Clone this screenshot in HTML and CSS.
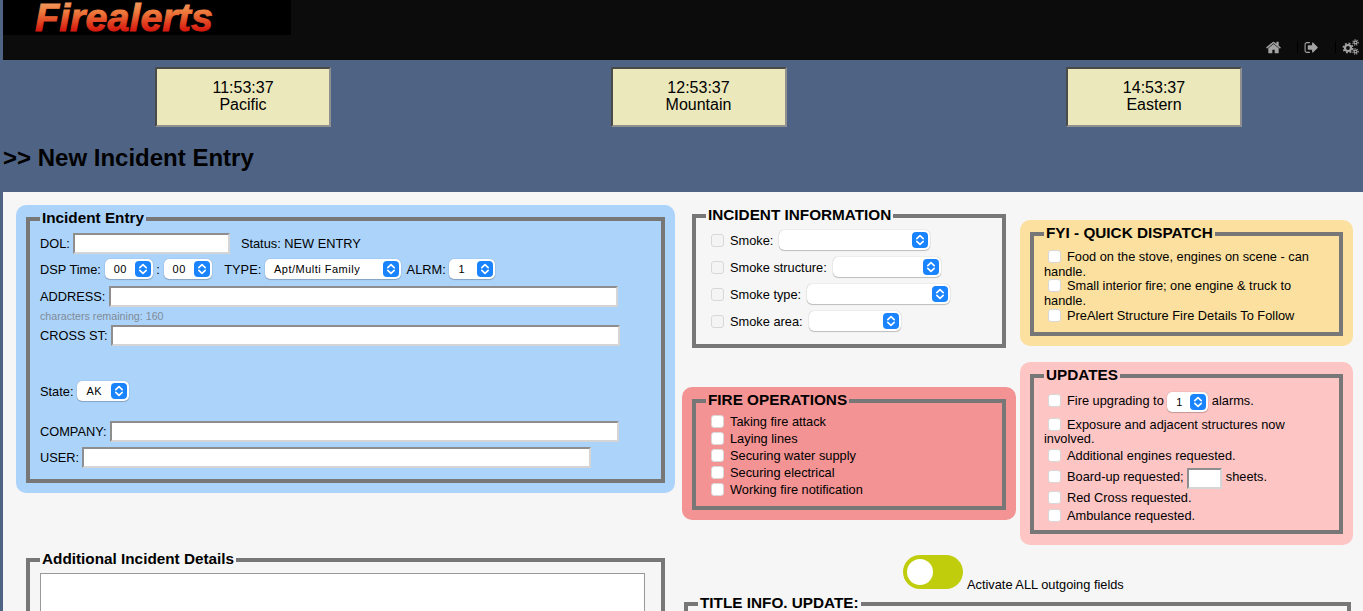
FILE: index.html
```html
<!DOCTYPE html>
<html lang="en">
<head>
  <meta charset="UTF-8" />
  <title>Firealerts – New Incident Entry</title>
  <link rel="stylesheet" href="styles.css">
</head>
<body>
  <svg class="defs" width="0" height="0">
    <defs>
      <linearGradient id="logoFill" x1="0" y1="0" x2="0" y2="1">
        <stop offset="0" stop-color="#f5b27c"/>
        <stop offset="0.4" stop-color="#ee7a3c"/>
        <stop offset="0.8" stop-color="#d81c10"/>
        <stop offset="1" stop-color="#c81208"/>
      </linearGradient>
    </defs>
    <symbol id="updown" viewBox="0 0 16 16">
      <path d="M4.8 6.6 8 3.6l3.2 3M4.8 9.4 8 12.4l3.2-3" fill="none" stroke="#fff" stroke-width="1.6" stroke-linecap="round" stroke-linejoin="round"/>
    </symbol>
  </svg>

  <header class="topbar">
    <div class="logo">
      <svg class="logo-svg" width="288" height="35"><text class="logo-text" x="32" y="30.5">Firealerts</text></svg>
    </div>
    <nav class="topnav">
      <svg class="icon icon-home" viewBox="0 0 1664 1408"><path transform="translate(0 -192)" d="M1408 992v480q0 26-19 45t-45 19h-384v-384h-256v384h-384q-26 0-45-19t-19-45v-480q0-1 .5-3t.5-3l575-474 575 474q1 2 1 6zm223-69l-62 74q-8 9-21 11h-3q-13 0-21-7l-692-577-692 577q-12 8-24 7-13-2-21-11l-62-74q-8-10-7-23.5t11-21.5l719-599q32-26 76-26t76 26l244 204v-195q0-14 9-23t23-9h192q14 0 23 9t9 23v408l219 182q10 8 11 21.5t-7 23.5z"/></svg>
      <span class="nav-sep"></span>
      <svg class="icon icon-out" viewBox="0 192 1664 1408"><path d="M704 1440q0 4 1 20t.5 26.5-3 23.5-10 19.5-20.5 6.5h-320q-119 0-203.5-84.5t-84.5-203.5v-704q0-119 84.5-203.5t203.5-84.5h320q13 0 22.5 9.5t9.5 22.5q0 4 1 20t.5 26.5-3 23.5-10 19.5-20.5 6.5h-320q-66 0-113 47t-47 113v704q0 66 47 113t113 47h312l11.5 1 11.5 3 8 5.5 7 9 2 13.5zm928-544q0 26-19 45l-544 544q-19 19-45 19t-45-19-19-45v-288h-448q-26 0-45-19t-19-45v-384q0-26 19-45t45-19h448v-288q0-26 19-45t45-19 45 19l544 544q19 19 19 45z"/></svg>
      <span class="nav-sep nav-sep-wide"></span>
      <svg class="icon icon-cogs" viewBox="0 0 17 16">
        <g fill="none" stroke="#a3a3a3">
          <circle cx="6" cy="9" r="3" stroke-width="2.2"/>
          <circle cx="6" cy="9" r="4.6" stroke-width="1.8" stroke-dasharray="1.8 1.81"/>
          <circle cx="13.5" cy="3.5" r="1.4" stroke-width="1.2"/>
          <circle cx="13.5" cy="3.5" r="2.6" stroke-width="1.2" stroke-dasharray="1.1 1.08"/>
          <circle cx="13.5" cy="12.5" r="1.4" stroke-width="1.2"/>
          <circle cx="13.5" cy="12.5" r="2.6" stroke-width="1.2" stroke-dasharray="1.1 1.08"/>
        </g>
      </svg>
    </nav>
  </header>

  <section class="clocks">
    <div class="clock">11:53:37<br>Pacific</div>
    <div class="clock">12:53:37<br>Mountain</div>
    <div class="clock">14:53:37<br>Eastern</div>
  </section>

  <h1 class="page-title">&gt;&gt; New Incident Entry</h1>

  <main class="content">
    <div class="col-left">
      <div class="panel panel-blue">
        <fieldset class="box box-entry">
          <legend>Incident Entry</legend>
          <div class="row row-dol">
            <label>DOL:</label>
            <input class="txt txt-dol" type="text">
            <span class="status">Status: NEW ENTRY</span>
          </div>
          <div class="row row-time">
            <label>DSP Time:</label>
            <span class="sel sel-time"><span class="val">00</span><span class="btn"><svg><use href="#updown"/></svg></span></span>
            <span>:</span>
            <span class="sel sel-time"><span class="val">00</span><span class="btn"><svg><use href="#updown"/></svg></span></span>
            <label class="lbl-type">TYPE:</label>
            <span class="sel sel-type"><span class="val">Apt/Multi Family</span><span class="btn"><svg><use href="#updown"/></svg></span></span>
            <label class="lbl-alrm">ALRM:</label>
            <span class="sel sel-alrm"><span class="val">1</span><span class="btn"><svg><use href="#updown"/></svg></span></span>
          </div>
          <div class="row row-address">
            <label>ADDRESS:</label>
            <input class="txt txt-long" type="text">
          </div>
          <div class="hint">characters remaining: 160</div>
          <div class="row">
            <label>CROSS ST:</label>
            <input class="txt txt-long" type="text">
          </div>
          <div class="row row-state">
            <label>State:</label>
            <span class="sel sel-state"><span class="val">AK</span><span class="btn"><svg><use href="#updown"/></svg></span></span>
          </div>
          <div class="row row-company">
            <label>COMPANY:</label>
            <input class="txt txt-long" type="text">
          </div>
          <div class="row row-user">
            <label>USER:</label>
            <input class="txt txt-long" type="text">
          </div>
        </fieldset>
      </div>

      <fieldset class="box box-details">
        <legend>Additional Incident Details</legend>
        <textarea class="details-text"></textarea>
      </fieldset>
    </div>

    <div class="col-right">
      <div class="col-pair">
        <div class="col-mid">
          <fieldset class="box box-info">
            <legend>INCIDENT INFORMATION</legend>
            <div class="info-row"><input class="chk" type="checkbox"><label>Smoke:</label><span class="sel sel-smoke"><span class="val"></span><span class="btn"><svg><use href="#updown"/></svg></span></span></div>
            <div class="info-row"><input class="chk" type="checkbox"><label>Smoke structure:</label><span class="sel sel-structure"><span class="val"></span><span class="btn"><svg><use href="#updown"/></svg></span></span></div>
            <div class="info-row"><input class="chk" type="checkbox"><label>Smoke type:</label><span class="sel sel-smoketype"><span class="val"></span><span class="btn"><svg><use href="#updown"/></svg></span></span></div>
            <div class="info-row"><input class="chk" type="checkbox"><label>Smoke area:</label><span class="sel sel-area"><span class="val"></span><span class="btn"><svg><use href="#updown"/></svg></span></span></div>
          </fieldset>

          <div class="panel panel-red">
            <fieldset class="box box-fire">
              <legend>FIRE OPERATIONS</legend>
              <div class="fire-row"><input class="chk" type="checkbox"><label>Taking fire attack</label></div>
              <div class="fire-row"><input class="chk" type="checkbox"><label>Laying lines</label></div>
              <div class="fire-row"><input class="chk" type="checkbox"><label>Securing water supply</label></div>
              <div class="fire-row"><input class="chk" type="checkbox"><label>Securing electrical</label></div>
              <div class="fire-row"><input class="chk" type="checkbox"><label>Working fire notification</label></div>
            </fieldset>
          </div>
        </div>

        <div class="col-side">
          <div class="panel panel-yellow">
            <fieldset class="box box-fyi">
              <legend>FYI - QUICK DISPATCH</legend>
              <div class="flow-row row-first"><input class="chk" type="checkbox">Food on the stove, engines on scene - can handle.</div>
              <div class="flow-row"><input class="chk" type="checkbox">Small interior fire; one engine &amp; truck to handle.</div>
              <div class="flow-row row-last"><input class="chk" type="checkbox">PreAlert Structure Fire Details To Follow</div>
            </fieldset>
          </div>

          <div class="panel panel-pink">
            <fieldset class="box box-updates">
              <legend>UPDATES</legend>
              <div class="flow-row row-upgrade"><input class="chk" type="checkbox">Fire upgrading to <span class="sel sel-upgrade"><span class="val">1</span><span class="btn"><svg><use href="#updown"/></svg></span></span> alarms.</div>
              <div class="flow-row row-exposure"><input class="chk" type="checkbox">Exposure and adjacent structures now involved.</div>
              <div class="flow-row row-engines"><input class="chk" type="checkbox">Additional engines requested.</div>
              <div class="flow-row row-board"><input class="chk" type="checkbox">Board-up requested; <input class="txt txt-sheets" type="text"> sheets.</div>
              <div class="flow-row row-redcross"><input class="chk" type="checkbox">Red Cross requested.</div>
              <div class="flow-row row-amb"><input class="chk" type="checkbox">Ambulance requested.</div>
            </fieldset>
          </div>
        </div>
      </div>

      <div class="toggle-row">
        <span class="toggle"><span class="knob"></span></span>
        <span class="toggle-label">Activate ALL outgoing fields</span>
      </div>

      <fieldset class="box box-title">
        <legend>TITLE INFO. UPDATE:</legend>
      </fieldset>
    </div>
  </main>
</body>
</html>
```

FILE: styles.css
```css
html, body {
  height: 100%;
  overflow: hidden;
}
body {
  margin: 0;
  padding-left: 3px;
  box-sizing: border-box;
  background-color: #4f6484;
  font-family: "Liberation Sans", Arial, sans-serif;
  font-size: 12.8px;
  color: #000;
}
.defs {
  position: absolute;
}

/* top bar */
.topbar {
  height: 60px;
  background-color: #0c0c0c;
  position: relative;
}
.logo {
  width: 288px;
  height: 35px;
  background-color: #000;
}
.logo-svg {
  display: block;
}
.logo-text {
  font-size: 39.5px;
  font-weight: bold;
  font-style: italic;
  fill: url(#logoFill);
  stroke: url(#logoFill);
  stroke-width: 0.9px;
}
.topnav {
  position: absolute;
  right: 4px;
  bottom: 6px;
  display: flex;
  align-items: center;
  height: 14px;
}
.icon {
  fill: #a3a3a3;
  display: block;
}
.icon-home { width: 15px; height: 13px; }
.icon-out { width: 14px; height: 13px; }
.icon-cogs { width: 17px; height: 16px; }
.nav-sep {
  width: 1px;
  height: 12px;
  background-color: #000;
  margin: 0 6px 0 16px;
}
.nav-sep-wide { margin-left: 17px; }

/* clocks */
.clocks {
  display: flex;
  gap: 279.5px;
  padding: 7px 0 0 152px;
}
.clock {
  width: 176px;
  height: 60px;
  box-sizing: border-box;
  border: 2px solid;
  border-color: #4a4a4a #909090 #909090 #4a4a4a;
  background-color: #ebe8bc;
  text-align: center;
  font-size: 16px;
  line-height: 17px;
  padding-top: 10px;
}

.page-title {
  margin: 0;
  height: 65px;
  font-size: 24px;
  line-height: 62px;
  font-weight: bold;
  color: #000;
}

/* main area */
.content {
  background-color: #f6f6f6;
  display: flex;
  height: 500px;
  padding: 13px 0 0 13px;
  box-sizing: border-box;
}
.col-left {
  width: 659px;
  flex: none;
}
.col-right {
  width: 671px;
  margin-left: 7px;
  flex: none;
}
.col-pair {
  display: flex;
  gap: 4px;
}
.col-mid { width: 334px; }
.col-side { width: 333px; padding-top: 15px; }

.panel {
  border-radius: 10px;
  padding: 5px 10px 0;
  box-sizing: border-box;
}
.panel-blue { background-color: #acd4fb; height: 288px; }
.panel-red { background-color: #f39393; margin-top: 39px; height: 133px; }
.panel-yellow { background-color: #fce09f; height: 126px; }
.panel-pink { background-color: #fec5c5; margin-top: 16px; height: 183px; }

/* group boxes */
.box {
  margin: 0;
  padding: 0 10px;
  border: 4px solid #777;
  box-sizing: border-box;
  min-width: 0;
}
.box legend {
  padding: 0 2px 3px;
  font-size: 15.3px;
  line-height: 15px;
  font-weight: bold;
}
.box-entry { height: 273px; }
.box-details { margin: 58px 0 0 10px; width: 639px; height: 200px; }
.box-info { margin: 2px 10px 0; height: 141px; }
.box-fire { height: 118px; }
.box-fyi { height: 111px; }
.box-updates { height: 167px; }
.box-title { width: 667px; height: 60px; margin: 6px 0 0 2px; }

/* inputs */
.row {
  display: flex;
  align-items: center;
  gap: 3px;
}
.row label { white-space: nowrap; }
.txt {
  box-sizing: border-box;
  height: 21px;
  margin: 0;
  padding: 0;
  background: #fff;
  border: 2px solid;
  border-color: #8e8e8e #d5d5d5 #d5d5d5 #8e8e8e;
  border-radius: 0;
}
.txt-dol { width: 157px; }
.txt-long { width: 509px; }
.txt-sheets { width: 35px; vertical-align: middle; }
.status { margin-left: 8px; }
.row-dol { margin-top: 5px; }
.row-time { margin-top: 5px; height: 20px; gap: 3.7px; }
.row-address { margin-top: 7px; gap: 4px; }
.row-state { margin-top: 35px; gap: 4px; }
.row-company { margin-top: 20px; }
.row-user { margin-top: 5px; }
.hint {
  font-size: 10.7px;
  line-height: 12px;
  color: #808b96;
  margin: 3px 0;
}
.lbl-type { margin-left: 9px; }
.lbl-alrm { margin-left: 2px; }

/* fake select */
.sel {
  display: inline-flex;
  align-items: center;
  justify-content: space-between;
  box-sizing: border-box;
  height: 20px;
  background: #fff;
  border-radius: 5px;
  box-shadow: 0 0 1px rgba(0, 0, 0, 0.35), 0 1px 1px rgba(0, 0, 0, 0.2);
  padding: 0 2px 0 9px;
  font-size: 11px;
  letter-spacing: 0.5px;
  vertical-align: middle;
}
.sel .btn {
  width: 16px;
  height: 16px;
  border-radius: 4px;
  background-color: #1a84ff;
  flex: none;
}
.sel .btn svg {
  display: block;
  width: 16px;
  height: 16px;
}
.sel-time { width: 48px; }
.sel-type { width: 136px; }
.sel-alrm { width: 46px; }
.sel-state { width: 52px; }
.sel-upgrade { width: 41px; }
.sel-smoke { width: 151px; }
.sel-structure { width: 108px; }
.sel-smoketype { width: 143px; }
.sel-area { width: 92px; }

.chk {
  -webkit-appearance: none;
  appearance: none;
  width: 13px;
  height: 13px;
  margin: 0;
  flex: none;
  box-sizing: border-box;
  background: #fff;
  border: 1px solid #d8d8d8;
  border-radius: 3px;
  vertical-align: -2px;
}

/* incident information */
.info-row {
  display: flex;
  align-items: center;
  height: 27px;
  padding-left: 5px;
}
.info-row .chk { background: #f4f4f4; margin-right: 6px; }
.info-row label { margin-right: 6px; }
.info-row:first-of-type { margin-top: 1.5px; }

/* fire operations */
.fire-row {
  display: flex;
  align-items: center;
  height: 17px;
  padding-left: 5px;
}
.fire-row .chk { margin-right: 6px; }
.fire-row:first-of-type { margin-top: 2.5px; }

/* flowing check rows, text wraps back under the checkbox */
.flow-row {
  line-height: 14.6px;
}
.flow-row .chk { margin: 0 6px 0 4px; }
.row-first { margin-top: 7px; }
.row-last { margin-top: 1px; }
.row-upgrade { margin-top: 6px; line-height: 20px; }
.row-exposure { margin-top: 6px; }
.row-engines { margin-top: 2px; }
.row-board { margin-top: 3px; line-height: 21px; }
.row-redcross { margin-top: 2px; }
.row-amb { margin-top: 4px; }

/* toggle */
.toggle-row {
  display: flex;
  align-items: flex-end;
  padding-left: 221px;
  margin-top: 10px;
}
.toggle {
  width: 60px;
  height: 34px;
  border-radius: 17px;
  background-color: #bfcd0d;
  padding: 4px;
  box-sizing: border-box;
}
.knob {
  display: block;
  width: 26px;
  height: 26px;
  border-radius: 50%;
  background-color: #fff;
}
.toggle-label { margin: 0 0 -3px 4px; line-height: 14px; }

.details-text {
  display: block;
  box-sizing: border-box;
  width: 605px;
  height: 120px;
  margin: 4px 0 0;
  padding: 0;
  border: 1px solid #999;
  background: #fff;
  resize: none;
}
```
